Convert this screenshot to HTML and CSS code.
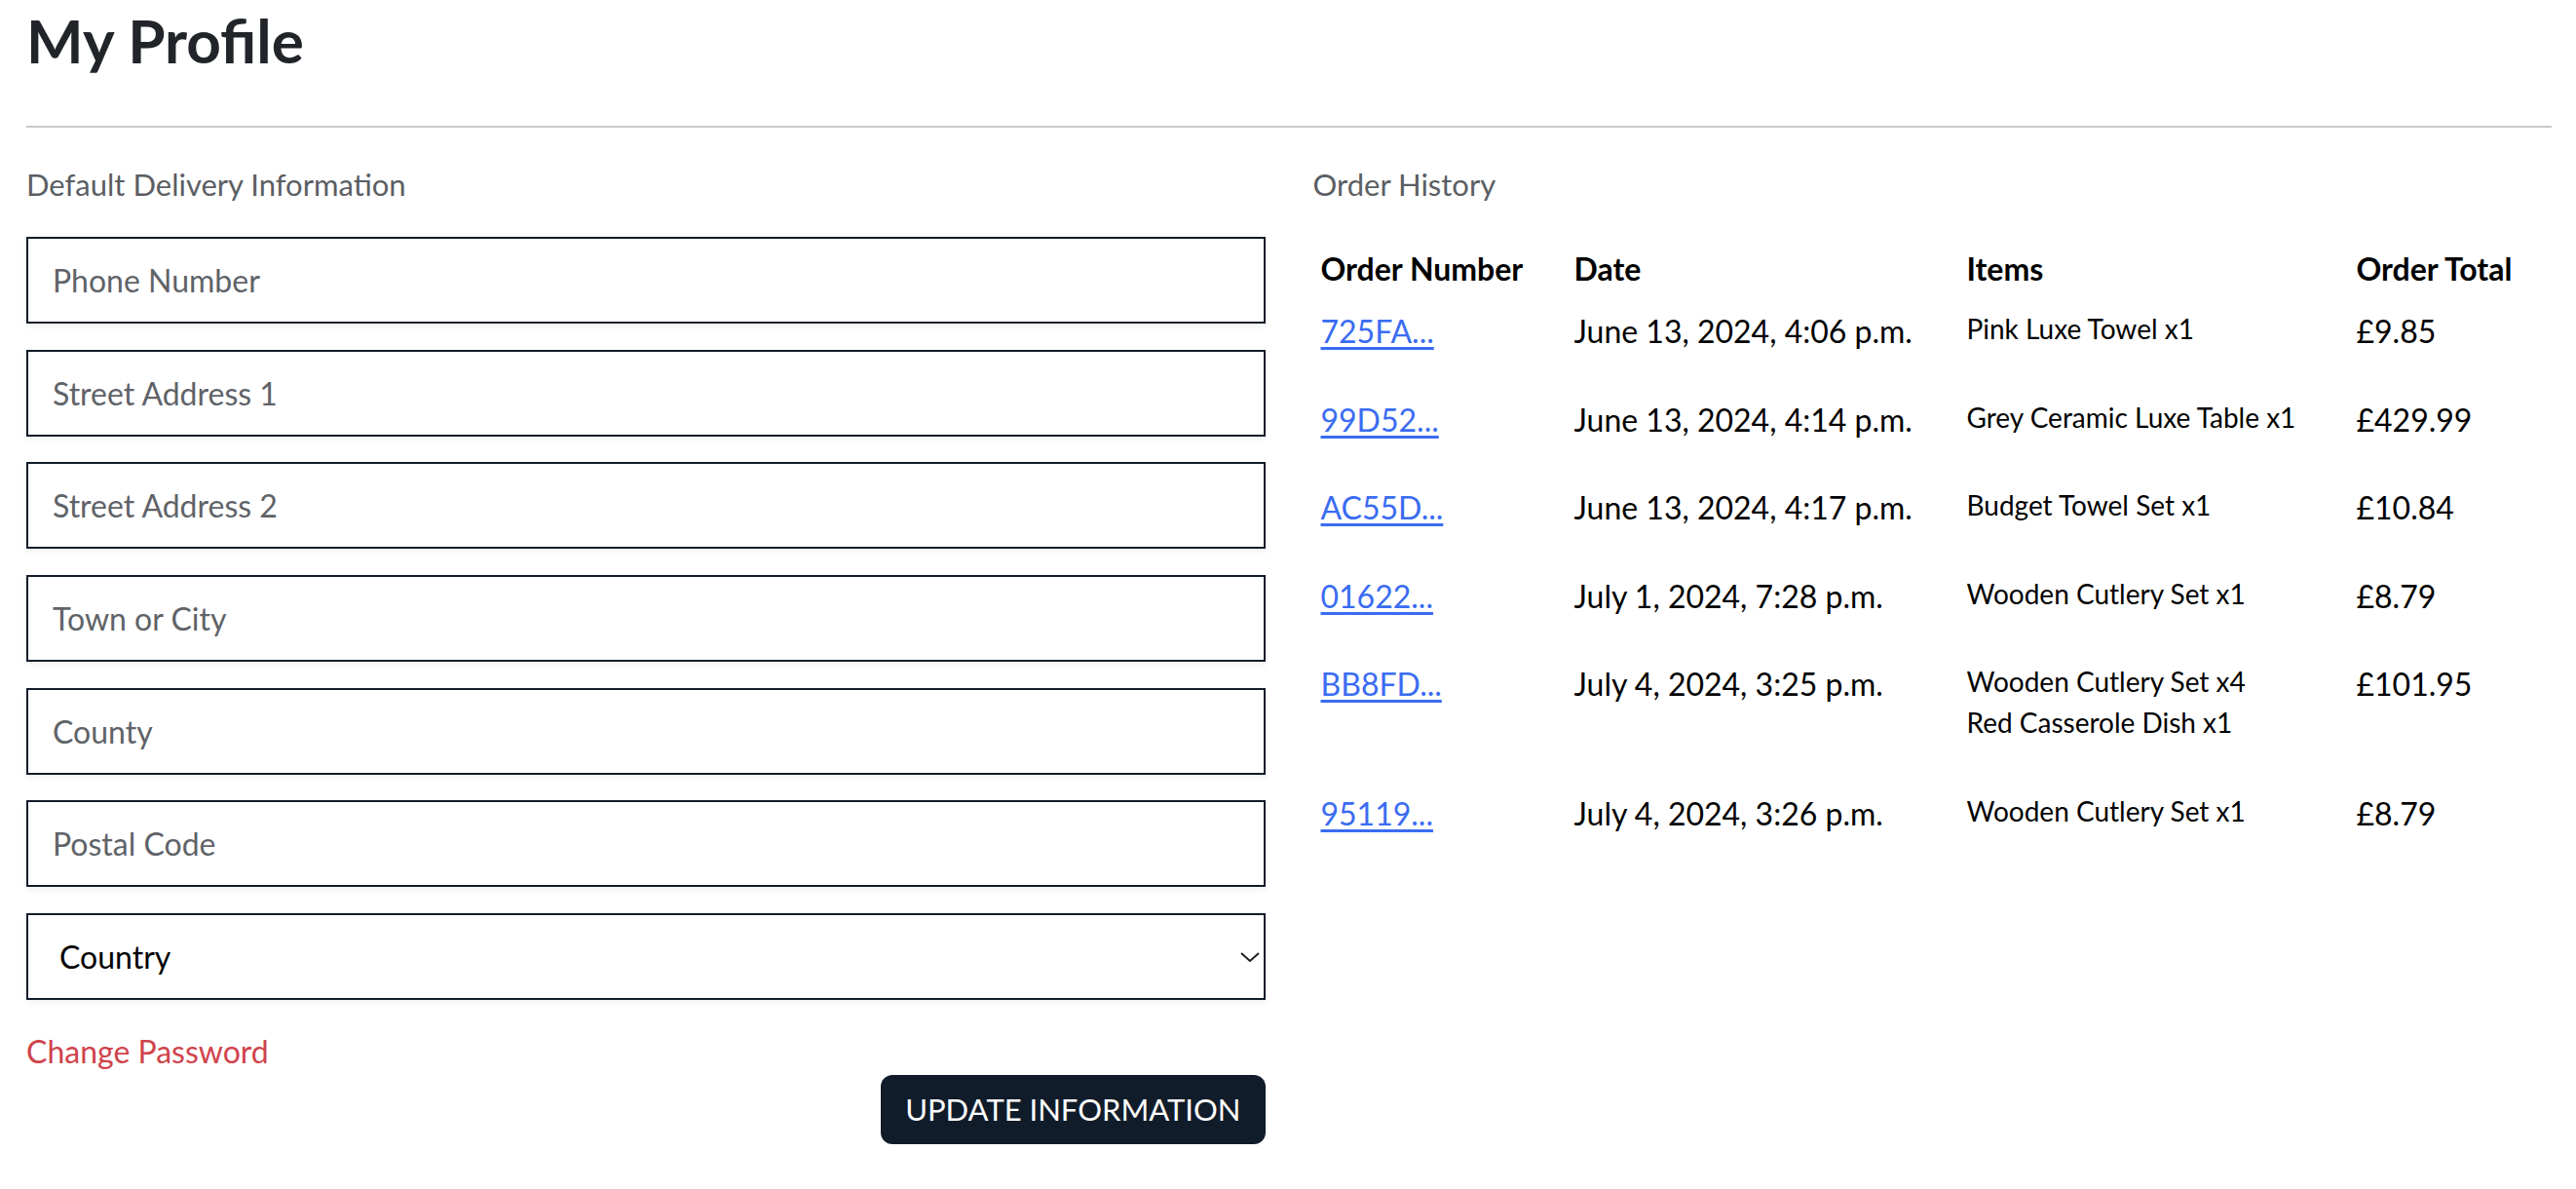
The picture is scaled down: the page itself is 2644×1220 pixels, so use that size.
FILE: index.html
```html
<!DOCTYPE html>
<html lang="en">
<head>
<meta charset="utf-8">
<title>My Profile</title>
<link rel="stylesheet" href="styles.css">
</head>
<body>
<main class="page">
  <h1 class="title">My Profile</h1>
  <hr class="divider">
  <div class="columns">
    <section class="col">
      <p class="section-label">Default Delivery Information</p>
      <form class="form">
        <input class="field" type="text" placeholder="Phone Number">
        <input class="field" type="text" placeholder="Street Address 1">
        <input class="field" type="text" placeholder="Street Address 2">
        <input class="field" type="text" placeholder="Town or City">
        <input class="field" type="text" placeholder="County">
        <input class="field" type="text" placeholder="Postal Code">
        <div class="select-wrap">
          <select class="field select">
            <option>Country</option>
          </select>
          <svg class="chevron" width="20" height="10" viewBox="0 0 20 10" aria-hidden="true"><path d="M1 1 L10 9 L19 1" fill="none" stroke="#222" stroke-width="2"/></svg>
        </div>
        <a class="danger-link" href="#">Change Password</a>
        <div class="actions">
          <button class="btn" type="button">UPDATE INFORMATION</button>
        </div>
      </form>
    </section>
    <section class="col">
      <p class="section-label">Order History</p>
      <table class="orders">
        <colgroup>
          <col class="c1"><col class="c2"><col class="c3"><col class="c4">
        </colgroup>
        <thead>
          <tr><th>Order Number</th><th>Date</th><th>Items</th><th>Order Total</th></tr>
        </thead>
        <tbody>
          <tr>
            <td><a class="order-link" href="#">725FA...</a></td>
            <td>June 13, 2024, 4:06 p.m.</td>
            <td><p class="items">Pink Luxe Towel x1</p></td>
            <td>£9.85</td>
          </tr>
          <tr>
            <td><a class="order-link" href="#">99D52...</a></td>
            <td>June 13, 2024, 4:14 p.m.</td>
            <td><p class="items">Grey Ceramic Luxe Table x1</p></td>
            <td>£429.99</td>
          </tr>
          <tr>
            <td><a class="order-link" href="#">AC55D...</a></td>
            <td>June 13, 2024, 4:17 p.m.</td>
            <td><p class="items">Budget Towel Set x1</p></td>
            <td>£10.84</td>
          </tr>
          <tr>
            <td><a class="order-link" href="#">01622...</a></td>
            <td>July 1, 2024, 7:28 p.m.</td>
            <td><p class="items">Wooden Cutlery Set x1</p></td>
            <td>£8.79</td>
          </tr>
          <tr>
            <td><a class="order-link" href="#">BB8FD...</a></td>
            <td>July 4, 2024, 3:25 p.m.</td>
            <td><p class="items">Wooden Cutlery Set x4<br>Red Casserole Dish x1</p></td>
            <td>£101.95</td>
          </tr>
          <tr>
            <td><a class="order-link" href="#">95119...</a></td>
            <td>July 4, 2024, 3:26 p.m.</td>
            <td><p class="items">Wooden Cutlery Set x1</p></td>
            <td>£8.79</td>
          </tr>
        </tbody>
      </table>
    </section>
  </div>
</main>
</body>
</html>
```

FILE: styles.css
```css
* { box-sizing: border-box; }

html, body {
  margin: 0;
  padding: 0;
  background: #ffffff;
}

body {
  font-family: "Lato", "Liberation Sans", sans-serif;
  color: #212529;
}

.page {
  padding: 3px 25px 0 27px;
}

.title {
  margin: 0;
  font-size: 62px;
  line-height: 76px;
  font-weight: 700;
  color: #212529;
}

.divider {
  margin: 50px 0 0 0;
  border: 0;
  border-top: 2px solid #c8c8c8;
  height: 0;
}

.columns {
  display: grid;
  grid-template-columns: 1fr 1fr;
  column-gap: 49px;
}

.section-label {
  margin: 35px 0 0 0;
  font-size: 31px;
  line-height: 46px;
  color: #5b5e63;
}

.form {
  display: flex;
  flex-direction: column;
  margin-top: 31px;
}

.field {
  display: block;
  width: 100%;
  height: 89px;
  margin: 0 0 26.67px 0;
  padding: 0 25px;
  border: 2px solid #121c2a;
  border-radius: 0;
  background: #ffffff;
  box-shadow: 0 3px 6px rgba(15, 23, 42, 0.06);
  font-family: inherit;
  font-size: 32px;
  color: #000;
  outline: none;
}

.field::placeholder {
  color: #5f6368;
  opacity: 1;
}

.select-wrap {
  position: relative;
}

.select {
  -webkit-appearance: none;
  appearance: none;
  padding-left: 32px;
  color: #000;
  margin-bottom: 29px;
}

.chevron {
  position: absolute;
  right: 6px;
  top: 40px;
}

.danger-link {
  display: block;
  align-self: flex-start;
  font-size: 32px;
  line-height: 48px;
  color: #d0434c;
  text-decoration: none;
}

.actions {
  display: flex;
  justify-content: flex-end;
}

.btn {
  height: 71px;
  padding: 0 25px;
  border: 0;
  border-radius: 12px;
  background: #111c2a;
  color: #ffffff;
  font-family: inherit;
  font-size: 31px;
  line-height: 48px;
  letter-spacing: 0;
}

.orders {
  margin-top: 32px;
  width: 100%;
  border-collapse: collapse;
  table-layout: fixed;
}

.c1 { width: 260px; }
.c2 { width: 403px; }
.c3 { width: 400px; }

.orders th,
.orders td {
  padding: 8px;
  text-align: left;
  vertical-align: top;
  font-size: 32px;
  line-height: 48px;
  color: #000;
}

.orders th {
  font-weight: 700;
}

.items {
  margin: 0 0 32.5px 0;
  font-size: 28px;
  line-height: 42px;
}

.order-link {
  color: #3a6cf2;
  text-decoration: underline;
  text-underline-offset: 4px;
}
```
